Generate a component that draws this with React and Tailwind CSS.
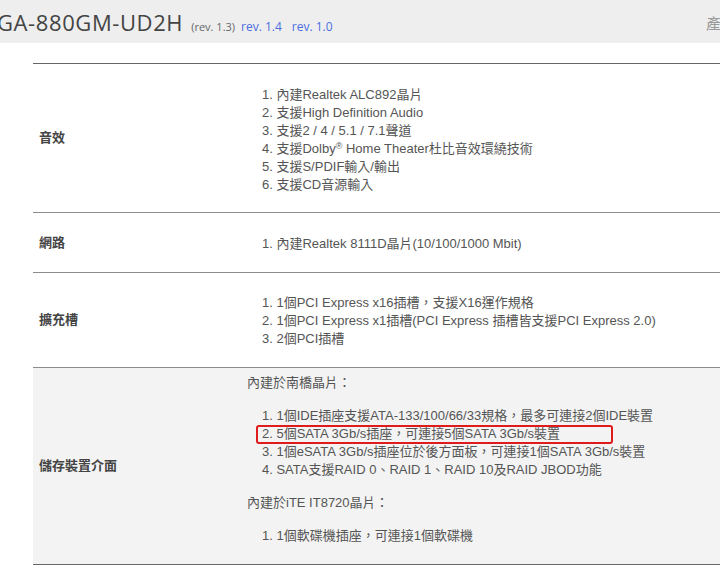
const body = {
  fontFamily: '"Liberation Sans", "Noto Sans CJK TC", sans-serif',
};

const Row = ({ label, children, className = '' }) => (
  <div className={`flex border-b border-[#8c8c8c] ${className}`}>
    <div className="w-[208px] shrink-0 pl-[6px] flex items-center text-[13px] font-semibold text-[#444]">
      {label}
    </div>
    <div className="flex-1 pl-[6px] text-[13px] leading-[18px] text-[#555]">
      {children}
    </div>
  </div>
);

const List = ({ items }) => (
  <ol className="pl-[15px]">
    {items.map((item, i) => (
      <li key={i} className="whitespace-nowrap">
        {i + 1}. {item}
      </li>
    ))}
  </ol>
);

const App = () => {
  return (
    <div className="w-[720px] h-[577px] overflow-hidden bg-white" style={body}>
      <div className="h-[43px] bg-[#eeeeee] flex items-center">
        <div className="flex items-baseline ml-[-3px] pt-[2px]">
          <span
            className="text-[22px] tracking-[0.6px] text-[#444]"
            style={{ fontFamily: '"Open Sans", sans-serif' }}
          >
            GA-880GM-UD2H
          </span>
          <span
            className="ml-[8px] text-[11px] text-[#666]"
            style={{ fontFamily: '"Open Sans", sans-serif' }}
          >
            (rev. 1.3)
          </span>
          <span
            className="ml-[6px] text-[12px] text-[#4a6ee0]"
            style={{ fontFamily: '"Open Sans", sans-serif' }}
          >
            rev. 1.4
          </span>
          <span
            className="ml-[10px] text-[12px] text-[#4a6ee0]"
            style={{ fontFamily: '"Open Sans", sans-serif' }}
          >
            rev. 1.0
          </span>
        </div>
        {/* nav text running off the right edge */}
        <span className="ml-auto mr-[-46px] pt-[6px] text-[15px] text-[#999] whitespace-nowrap">
          產品規格
        </span>
      </div>

      <div className="mt-[20px] ml-[33px] border-t border-[#666]">
        <Row label="音效">
          <div className="pt-[22px] pb-[18px]">
            <ol className="pl-[15px]">
              <li>1. 內建Realtek ALC892晶片</li>
              <li>2. 支援High Definition Audio</li>
              <li>3. 支援2 / 4 / 5.1 / 7.1聲道</li>
              <li>
                4. 支援Dolby<sup className="text-[9px]">®</sup> Home Theater杜比音效環繞技術
              </li>
              <li>5. 支援S/PDIF輸入/輸出</li>
              <li>6. 支援CD音源輸入</li>
            </ol>
          </div>
        </Row>
        <Row label="網路">
          <div className="pt-[22px] pb-[19px]">
            <List items={['內建Realtek 8111D晶片(10/100/1000 Mbit)']} />
          </div>
        </Row>
        <Row label="擴充槽">
          <div className="pt-[21px] pb-[19px]">
            <List
              items={[
                '1個PCI Express x16插槽，支援X16運作規格',
                '1個PCI Express x1插槽(PCI Express 插槽皆支援PCI Express 2.0)',
                '2個PCI插槽',
              ]}
            />
          </div>
        </Row>
        <Row label="儲存裝置介面" className="bg-[#f3f3f3] border-[#666]">
          <div className="pt-[6px] pb-[19px]">
            <p>內建於南橋晶片：</p>
            <ol className="pl-[15px] mt-[15px]">
              <li className="whitespace-nowrap">
                1. 1個IDE插座支援ATA-133/100/66/33規格，最多可連接2個IDE裝置
              </li>
              <li className="relative whitespace-nowrap">
                2. 5個SATA 3Gb/s插座，可連接5個SATA 3Gb/s裝置
                <span className="absolute left-[-6px] top-[0px] w-[357px] h-[19px] border-2 border-[#e01b1b] rounded-[3px]" />
              </li>
              <li className="whitespace-nowrap">
                3. 1個eSATA 3Gb/s插座位於後方面板，可連接1個SATA 3Gb/s裝置
              </li>
              <li className="whitespace-nowrap">
                4. SATA支援RAID 0、RAID 1、RAID 10及RAID JBOD功能
              </li>
            </ol>
            <p className="mt-[15px]">內建於iTE IT8720晶片：</p>
            <ol className="pl-[15px] mt-[15px]">
              <li>1. 1個軟碟機插座，可連接1個軟碟機</li>
            </ol>
          </div>
        </Row>
      </div>
    </div>
  );
};

export default App;
